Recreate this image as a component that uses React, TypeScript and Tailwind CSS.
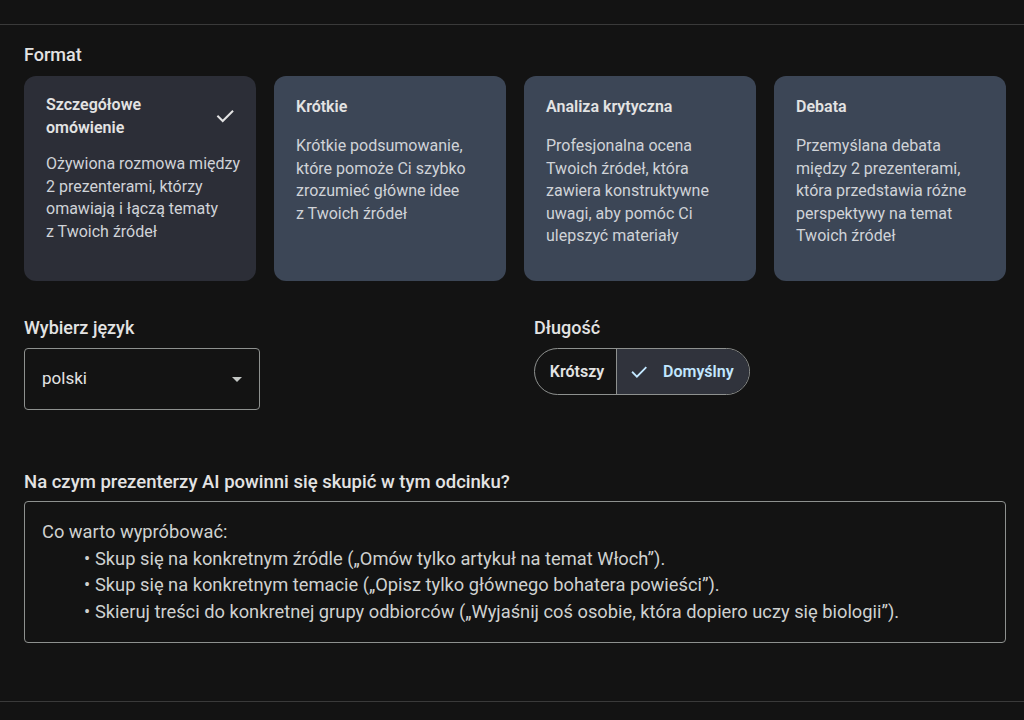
import React from "react";

const font = { fontFamily: "Roboto, 'Noto Sans', sans-serif" };

function Check({ className }: { className?: string }) {
  return (
    <svg viewBox="0 0 24 24" className={className} fill="none" stroke="currentColor" strokeWidth="2.2" strokeLinecap="square">
      <path d="M4.5 12.5l5 5L20 7" />
    </svg>
  );
}

const cards = [
  {
    title: ["Szczegółowe", "omówienie"],
    desc: ["Ożywiona rozmowa między", "2 prezenterami, którzy", "omawiają i łączą tematy", "z Twoich źródeł"],
    selected: true,
  },
  {
    title: ["Krótkie"],
    desc: ["Krótkie podsumowanie,", "które pomoże Ci szybko", "zrozumieć główne idee", "z Twoich źródeł"],
  },
  {
    title: ["Analiza krytyczna"],
    desc: ["Profesjonalna ocena", "Twoich źródeł, która", "zawiera konstruktywne", "uwagi, aby pomóc Ci", "ulepszyć materiały"],
  },
  {
    title: ["Debata"],
    desc: ["Przemyślana debata", "między 2 prezenterami,", "która przedstawia różne", "perspektywy na temat", "Twoich źródeł"],
  },
];

export default function App() {
  return (
    <div className="w-[1024px] h-[720px] bg-[#131313] text-[#e3e3e3] overflow-hidden flex flex-col" style={font}>
      <div className="h-[25px] border-b border-[#3a3a3a] shrink-0" />
      <div className="pl-6 pr-[18px] flex flex-col">
        <div className="mt-[17px] text-[18px] font-medium leading-[26px] text-[#e3e3e3]">Format</div>
        <div className="mt-[8px] grid grid-cols-4 gap-[18px]">
          {cards.map((c, i) => (
            <div
              key={i}
              className={
                "h-[205px] rounded-[12px] px-[22px] " +
                (c.selected ? "bg-[#2c2e37] pt-[17px]" : "bg-[#3c4656] pt-[19px]")
              }
            >
              <div className="flex items-center justify-between">
                <div className="text-[16px] font-semibold leading-[23px] text-[#e3e3e3]">
                  {c.title.map((t) => (
                    <div key={t}>{t}</div>
                  ))}
                </div>
                {c.selected && <Check className="w-[22px] h-[22px] text-[#e3e3e3] -mr-[2px]" />}
              </div>
              <div className={(c.selected ? "mt-[14px]" : "mt-[17px]") + " text-[16px] leading-[22.5px] text-[#d0d3d8]"}>
                {c.desc.map((d) => (
                  <div key={d} className="whitespace-nowrap">{d}</div>
                ))}
              </div>
            </div>
          ))}
        </div>

        <div className="mt-[34px] flex">
          <div className="w-[510px]">
            <div className="text-[18px] font-medium leading-[26px]">Wybierz język</div>
            <div className="mt-[7px] w-[236px] h-[62px] border border-[#8e918f] rounded-[4px] flex items-center justify-between pl-[17px] pr-[17px]">
              <span className="text-[17px] text-[#e3e3e3]">polski</span>
              <svg viewBox="0 0 10 5" className="w-[10px] h-[5px]"><path d="M0 0h10L5 5z" fill="#c4c7c5" /></svg>
            </div>
          </div>
          <div>
            <div className="text-[18px] font-medium leading-[26px]">Długość</div>
            <div className="mt-[7px] h-[47px] flex border border-[#8e918f] rounded-full overflow-hidden">
              <div className="w-[82px] flex items-center justify-center pl-[3px] text-[16px] font-semibold text-[#e3e3e3] border-r border-[#8e918f]">
                Krótszy
              </div>
              <div className="w-[132px] bg-[#30333c] flex items-center pl-[12px] gap-[14px] text-[16px] font-semibold text-[#c2e7ff]">
                <Check className="w-[20px] h-[20px] shrink-0" />
                <span>Domyślny</span>
              </div>
            </div>
          </div>
        </div>

        <div className="mt-[59px] text-[18.5px] font-medium leading-[26px]">Na czym prezenterzy AI powinni się skupić w tym odcinku?</div>
        <div className="mt-[6px] h-[142px] border border-[#8e918f] rounded-[4px] pl-[17px] pt-[17px] text-[18.3px] leading-[26.5px] text-[#cfd1d0]">
          <div>Co warto wypróbować:</div>
          <ul className="pl-[42px]">
            <li className="flex"><span className="w-[11px]">•</span>Skup się na konkretnym źródle („Omów tylko artykuł na temat Włoch”).</li>
            <li className="flex"><span className="w-[11px]">•</span>Skup się na konkretnym temacie („Opisz tylko głównego bohatera powieści”).</li>
            <li className="flex"><span className="w-[11px]">•</span>Skieruj treści do konkretnej grupy odbiorców („Wyjaśnij coś osobie, która dopiero uczy się biologii”).</li>
          </ul>
        </div>
      </div>
      <div className="mt-[58px] border-t border-[#3a3a3a]" />
    </div>
  );
}
